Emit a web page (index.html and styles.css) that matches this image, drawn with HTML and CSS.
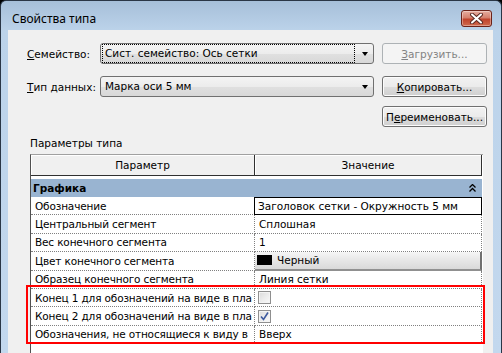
FILE: index.html
```html
<!DOCTYPE html>
<html lang="ru">
    <head>
        <meta charset="UTF-8" />
        <title>Свойства типа</title>
        <link rel="stylesheet" href="styles.css">
    </head>

    <body>
        <div class="window">
            <div class="titlebar">
                <span class="title">Свойства типа</span>
                <div class="close">
                    <svg width="17" height="11" viewBox="0 0 17 11">
                        <path d="M4 1.5 L13 9.5 M13 1.5 L4 9.5" stroke="#5a2a24" stroke-width="4" stroke-linecap="round" />
                        <path d="M4 1.5 L13 9.5 M13 1.5 L4 9.5" stroke="#fff" stroke-width="2" stroke-linecap="round" />
                    </svg>
                </div>
            </div>
            <div class="frame">
                <div class="client">
                    <!-- семейство -->
                    <div class="row">
                        <span class="lbl"><u>С</u>емейство:</span>
                        <div class="combo">
                            <span class="combo-text focus">Сист. семейство: Ось сетки</span>
                            <span class="arrow"></span>
                        </div>
                        <div class="btn disabled"><u>З</u>агрузить...</div>
                    </div>
                    <!-- тип -->
                    <div class="row row2">
                        <span class="lbl"><u>Т</u>ип данных:</span>
                        <div class="combo">
                            <span class="combo-text">Марка оси 5 мм</span>
                            <span class="arrow"></span>
                        </div>
                        <div class="btn"><u>К</u>опировать...</div>
                    </div>
                    <div class="row row3">
                        <div class="btn">П<u>е</u>реименовать...</div>
                    </div>

                    <div class="section">Параметры типа</div>

                    <div class="grid">
                        <div class="grid-head">
                            <div class="hcell">Параметр</div>
                            <div class="hcell">Значение</div>
                        </div>
                        <div class="group">
                            <span>Графика</span>
                            <svg width="7" height="8" viewBox="0 0 7 8">
                                <path d="M0.5 3.5 L3.5 0.5 L6.5 3.5 M0.5 7.5 L3.5 4.5 L6.5 7.5" stroke="#000" stroke-width="1.3" fill="none" />
                            </svg>
                        </div>
                        <div class="prow">
                            <div class="pname">Обозначение</div>
                            <div class="pval edit">Заголовок сетки - Окружность 5 мм</div>
                        </div>
                        <div class="prow">
                            <div class="pname">Центральный сегмент</div>
                            <div class="pval">Сплошная</div>
                        </div>
                        <div class="prow">
                            <div class="pname">Вес конечного сегмента</div>
                            <div class="pval">1</div>
                        </div>
                        <div class="prow">
                            <div class="pname">Цвет конечного сегмента</div>
                            <div class="pval color"><span class="swatch"></span>Черный</div>
                        </div>
                        <div class="prow">
                            <div class="pname">Образец конечного сегмента</div>
                            <div class="pval">Линия сетки</div>
                        </div>
                        <div class="prow">
                            <div class="pname">Конец 1 для обозначений на виде в пла</div>
                            <div class="pval"><span class="chk"></span></div>
                        </div>
                        <div class="prow">
                            <div class="pname">Конец 2 для обозначений на виде в пла</div>
                            <div class="pval">
                                <span class="chk">
                                    <svg width="11" height="11" viewBox="0 0 11 11">
                                        <path d="M2 5.5 L4.5 8.5 L9 1.5" stroke="#3d5a9e" stroke-width="1.6" fill="none" />
                                    </svg>
                                </span>
                            </div>
                        </div>
                        <div class="prow">
                            <div class="pname">Обозначения, не относящиеся к виду в</div>
                            <div class="pval">Вверх</div>
                        </div>
                    </div>
                </div>
            </div>
            <!-- выделение -->
            <div class="highlight"></div>
        </div>
    </body>
</html>
```

FILE: styles.css
```css
html,
body {
    margin: 0;
    background: #000;
}

.window {
    position: relative;
    width: 502px;
    height: 353px;
    box-sizing: border-box;
    overflow: hidden;
    border: 1px solid #2a3646;
    border-bottom: 0;
    border-radius: 6px 6px 0 0;
    background: linear-gradient(#a6bfd9, #bcd3ea 30px, #c3d8ee);
    font-family: "DejaVu Sans", sans-serif;
    font-size: 10.5px;
    color: #000;
}

/* заголовок */
.titlebar {
    display: flex;
    justify-content: space-between;
    align-items: flex-start;
    height: 29px;
    padding-left: 11px;
}
.title {
    margin-top: 10px;
    font-family: "Noto Sans", sans-serif;
    font-size: 12px;
    line-height: 16px;
}
.close {
    display: flex;
    align-items: center;
    justify-content: center;
    width: 29px;
    height: 15px;
    margin-top: 9px;
    margin-right: 9px;
    border: 1px solid #6b2219;
    border-radius: 3px;
    background: linear-gradient(#e6ada0, #d5806d 45%, #c0432c 55%, #cf6a4e);
    box-shadow: inset 0 0 0 1px rgba(255, 255, 255, 0.35);
}

.frame {
    padding: 0 8px 0 7px;
}

.client {
    height: 330px;
    background: #f0f0f0;
    padding-top: 13px;
    box-sizing: border-box;
}

/* строки с полями */
.row {
    display: flex;
    align-items: center;
    height: 21px;
    padding-left: 19px;
}
.row2 {
    margin-top: 12px;
}
.row3 {
    margin-top: 9px;
    justify-content: flex-end;
    padding-right: 6px;
}
.lbl {
    width: 73px;
}

.combo {
    display: flex;
    align-items: center;
    width: 274px;
    height: 21px;
    box-sizing: border-box;
    border: 1px solid #707070;
    border-radius: 3px;
    background: linear-gradient(#f4f4f4, #ececec 50%, #e0e0e0 51%, #d8d8d8);
}
.combo-text {
    flex: 1;
    margin-left: 1px;
    padding: 2px 0 2px 2px;
    line-height: 13px;
    border: 1px solid transparent;
}
.combo-text.focus {
    border: 1px dotted #000;
}
.arrow {
    width: 0;
    height: 0;
    margin: 0 5px 0 7px;
    border-left: 3.5px solid transparent;
    border-right: 3.5px solid transparent;
    border-top: 4px solid #000;
}

.btn {
    display: flex;
    align-items: center;
    justify-content: center;
    width: 105px;
    height: 21px;
    margin-left: 8px;
    box-sizing: border-box;
    border: 1px solid #707070;
    border-radius: 3px;
    background: linear-gradient(#f2f2f2, #ebebeb 50%, #dddddd 51%, #cfcfcf);
    box-shadow: inset 0 0 0 1px #fcfcfc;
}
.btn.disabled {
    border-color: #adb2b5;
    background: #f4f4f4;
    box-shadow: none;
    color: #838383;
}

.section {
    margin: 10px 0 4px 22px;
    line-height: 13px;
}

/* таблица параметров */
.grid {
    width: 453px;
    height: 200px;
    margin-left: 22px;
    box-sizing: border-box;
    border-top: 1px solid #a0a0a0;
    border-left: 1px solid #505050;
    background: #fff;
}
.grid-head {
    display: grid;
    grid-template-columns: 224px 227px;
    height: 21px;
    margin-bottom: 3px;
}
.hcell {
    display: flex;
    align-items: center;
    justify-content: center;
    background: #f0f0f0;
    border-right: 1px solid #303030;
    border-bottom: 1px solid #303030;
    box-shadow: inset 1px 1px #fff;
}

.group {
    display: flex;
    justify-content: space-between;
    align-items: center;
    width: 451px;
    height: 18px;
    padding: 0 6px 0 2px;
    box-sizing: border-box;
    background: #99b4d1;
    font-weight: bold;
}

.prow {
    display: grid;
    grid-template-columns: 224px 227px;
    height: 18.4px;
}
.pname,
.pval {
    display: flex;
    align-items: center;
    box-sizing: border-box;
    overflow: hidden;
    white-space: nowrap;
    border-right: 1px dotted #808080;
    border-bottom: 1px dotted #808080;
}
.pname {
    padding-left: 4px;
    letter-spacing: -0.15px;
}
.pval {
    padding-left: 4px;
}
.pval.edit {
    border: 1px solid #000;
    padding-left: 3px;
    margin-left: -1px;
}
.pval.color {
    background: linear-gradient(#f6f6f6, #e6e6e6 50%, #d9d9d9);
    border-right: 2px solid #707070;
    border-bottom: 2px solid #909090;
    padding-left: 2px;
}
.swatch {
    width: 15px;
    height: 10px;
    margin-right: 5px;
    background: #000;
}

.chk {
    display: flex;
    align-items: center;
    justify-content: center;
    width: 13px;
    height: 13px;
    margin-left: -1px;
    box-sizing: border-box;
    border: 1px solid #8f8f8f;
    background: linear-gradient(135deg, #dcdcdc, #fbfbfb);
    box-shadow: inset 0 0 0 1px #f4f4f4;
}

/* красная рамка */
.highlight {
    position: absolute;
    left: 25px;
    top: 284px;
    width: 459px;
    height: 59px;
    box-sizing: border-box;
    border: 2px solid #f00;
}
```
